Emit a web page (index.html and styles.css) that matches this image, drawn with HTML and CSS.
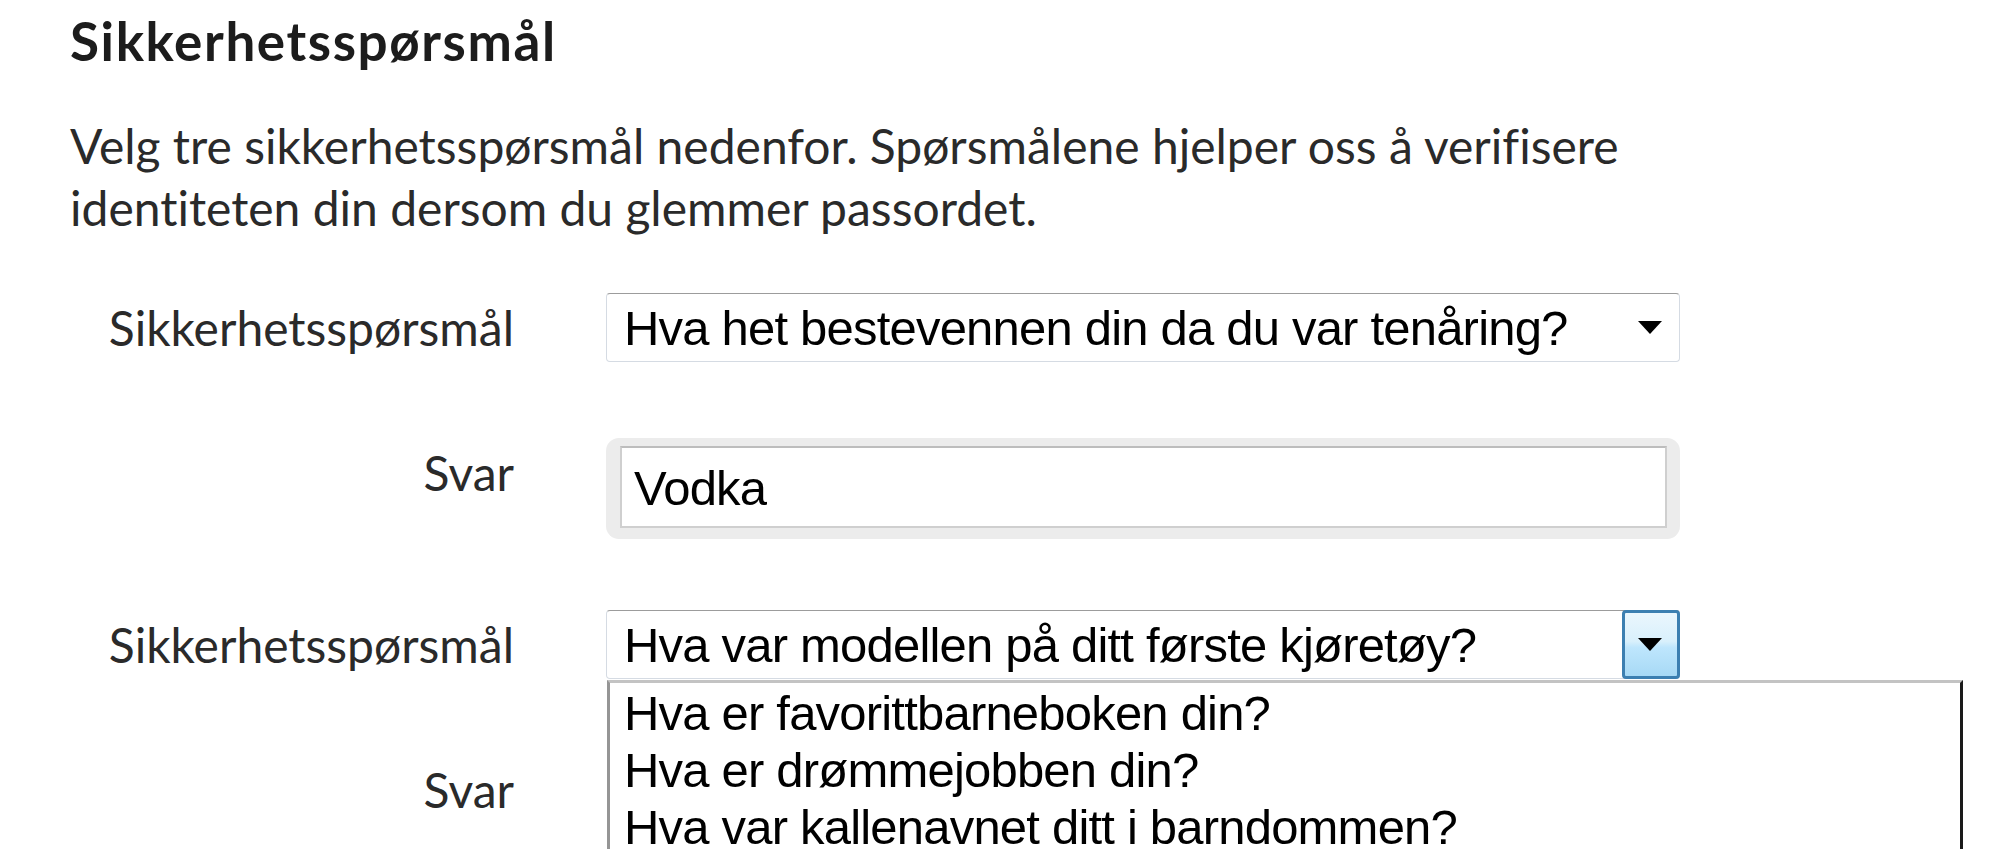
FILE: index.html
```html
<!DOCTYPE html>
<html lang="no">
<head>
<meta charset="utf-8">
<title>Sikkerhetsspørsmål</title>
<link rel="stylesheet" href="styles.css">
</head>
<body>
<main class="page">
  <h1 class="title">Sikkerhetsspørsmål</h1>
  <p class="intro">Velg tre sikkerhetsspørsmål nedenfor. Spørsmålene hjelper oss å verifisere<br>identiteten din dersom du glemmer passordet.</p>
  <div class="form">
    <div class="row row-question">
      <div class="label">Sikkerhetsspørsmål</div>
      <div class="select">
        <span class="select-value">Hva het bestevennen din da du var tenåring?</span>
        <span class="select-btn"><span class="arrow"></span></span>
      </div>
    </div>
    <div class="row row-answer">
      <div class="label">Svar</div>
      <div class="field field-focus">
        <div class="input">Vodka</div>
      </div>
    </div>
    <div class="row row-question">
      <div class="label">Sikkerhetsspørsmål</div>
      <div class="select select-open">
        <span class="select-value">Hva var modellen på ditt første kjøretøy?</span>
        <span class="select-btn select-btn-hover"><span class="arrow"></span></span>
        <ul class="options">
          <li>Hva er favorittbarneboken din?</li>
          <li>Hva er drømmejobben din?</li>
          <li>Hva var kallenavnet ditt i barndommen?</li>
        </ul>
      </div>
    </div>
    <div class="row row-answer">
      <div class="label">Svar</div>
      <div class="field">
        <div class="input"></div>
      </div>
    </div>
  </div>
</main>
</body>
</html>
```

FILE: styles.css
```css
html, body {
  margin: 0;
  padding: 0;
  background: #ffffff;
  overflow: hidden;
}

.page {
  height: 849px;
  padding: 11px 0 0 70px;
  box-sizing: border-box;
  font-family: Lato, "Open Sans", sans-serif;
  font-variant-ligatures: none;
  color: #262626;
}

.title {
  margin: 0;
  font-size: 53px;
  line-height: 60px;
  font-weight: 700;
  letter-spacing: 1.6px;
  color: #1c1c1c;
}

.intro {
  margin: 44px 0 0;
  font-size: 48px;
  line-height: 62px;
  color: #2a2a2a;
}

.form {
  margin-top: 54px;
  display: flex;
  flex-direction: column;
}

.row {
  display: flex;
  align-items: flex-start;
  gap: 92px;
}

.row-answer {
  margin-top: 76px;
}

.row-question + .row-answer + .row-question {
  margin-top: 71px;
}

.label {
  width: 444px;
  flex: none;
  text-align: right;
  font-size: 48px;
  line-height: 62px;
  padding-top: 4px;
  color: #2a2a2a;
}

.select {
  position: relative;
  width: 1074px;
  height: 69px;
  box-sizing: border-box;
  border: 1px solid #d5dbe3;
  border-top-color: #9c9c9c;
  border-radius: 4px;
  background: #ffffff;
  display: flex;
  align-items: stretch;
  font-family: "Liberation Sans", Arial, sans-serif;
  font-size: 49px;
  letter-spacing: -0.8px;
  color: #000000;
}

.select-value {
  flex: 1;
  padding: 2px 0 0 17px;
  line-height: 65px;
  white-space: nowrap;
}

.select-btn {
  width: 58px;
  display: flex;
  align-items: center;
  justify-content: center;
  box-sizing: border-box;
  margin: -1px -1px -1px 0;
}

.select-btn-hover {
  border: 3px solid #3c7fb1;
  border-radius: 4px;
  background: linear-gradient(#eaf6fd, #d9f0fc 45%, #bee6fd 55%, #a7d9f5);
}

.arrow {
  width: 0;
  height: 0;
  border-left: 12px solid transparent;
  border-right: 12px solid transparent;
  border-top: 13px solid #000000;
  margin-left: -2px;
}

.options {
  position: absolute;
  top: 69px;
  left: 0;
  width: 1356px;
  height: 260px;
  margin: 0;
  padding: 2px 0 0 14px;
  box-sizing: border-box;
  list-style: none;
  background: #ffffff;
  border-top: 3px solid #c3c3c3;
  border-left: 3px solid #959595;
  border-right: 3px solid #1a1a1a;
  font-size: 49px;
  line-height: 57px;
  letter-spacing: -0.8px;
  color: #000000;
  z-index: 2;
}

.field {
  width: 1074px;
  height: 101px;
  box-sizing: border-box;
  padding: 8px 13px 11px 14px;
  border-radius: 13px;
}

.field-focus {
  background: #ececec;
}

.input {
  height: 100%;
  box-sizing: border-box;
  border: 2px solid #cfcfcf;
  border-top-color: #bdbdbd;
  background: #ffffff;
  padding: 2px 0 0 12px;
  font-family: "Liberation Sans", Arial, sans-serif;
  font-size: 49px;
  letter-spacing: -0.8px;
  line-height: 76px;
  color: #000000;
}
```
